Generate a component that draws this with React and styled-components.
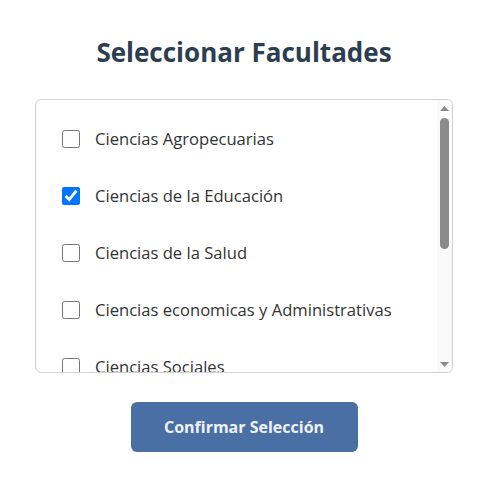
import React, { useState, useRef, useLayoutEffect } from 'react';
import styled, { createGlobalStyle } from 'styled-components';

const facultades = [
  'Ciencias Agropecuarias',
  'Ciencias de la Educación',
  'Ciencias de la Salud',
  'Ciencias economicas y Administrativas',
  'Ciencias Sociales',
  'Ciencias Básicas',
  'Ingeniería',
  'Derecho y Ciencias Políticas',
];

// arrows take 15px each, thumb sits 3px inside the track
const ARROW = 15;
const INSET = 3;

export default function App() {
  const [selected, setSelected] = useState(['Ciencias de la Educación']);
  const [thumb, setThumb] = useState({ top: ARROW + INSET, height: 0 });
  const scrollRef = useRef(null);

  const updateThumb = () => {
    const el = scrollRef.current;
    if (!el) return;
    const track = el.clientHeight - ARROW * 2 - INSET * 2;
    const height = Math.max(20, (track * el.clientHeight) / el.scrollHeight);
    const max = el.scrollHeight - el.clientHeight;
    const top = ARROW + INSET + (max > 0 ? (el.scrollTop / max) * (track - height) : 0);
    setThumb({ top, height });
  };

  useLayoutEffect(updateThumb, []);

  const toggle = (name) => {
    setSelected((prev) =>
      prev.includes(name) ? prev.filter((n) => n !== name) : [...prev, name]
    );
  };

  const scrollBy = (dy) => {
    if (scrollRef.current) scrollRef.current.scrollBy({ top: dy });
  };

  return (
    <Wrapper>
      <GlobalStyle />
      <Title>Seleccionar Facultades</Title>
      <ListBox>
        <ListScroll ref={scrollRef} onScroll={updateThumb}>
          {facultades.map((f) => (
            <Item key={f}>
              <Check type='checkbox' checked={selected.includes(f)} onChange={() => toggle(f)} />
              <ItemText>{f}</ItemText>
            </Item>
          ))}
        </ListScroll>
        <ScrollTrack>
          <ArrowButton onClick={() => scrollBy(-40)}>
            <svg width='9' height='5' viewBox='0 0 9 5'><path d='M4.5 0L9 5H0z' fill='#8a8a8a' /></svg>
          </ArrowButton>
          <Thumb style={{ top: thumb.top, height: thumb.height }} />
          <ArrowButton $bottom onClick={() => scrollBy(40)}>
            <svg width='9' height='5' viewBox='0 0 9 5'><path d='M0 0H9L4.5 5z' fill='#8a8a8a' /></svg>
          </ArrowButton>
        </ScrollTrack>
      </ListBox>
      <ConfirmButton>Confirmar Selección</ConfirmButton>
    </Wrapper>
  );
}

const GlobalStyle = createGlobalStyle`
  body {
    margin: 0;
    background: #ffffff;
    font-family: "Open Sans", "Noto Sans", sans-serif;
  }
`;

const Wrapper = styled.div`
  display: flex;
  flex-direction: column;
  align-items: center;
  padding: 30px 3px 0 0;
`;

const Title = styled.h2`
  margin: 0 0 25px;
  font-size: 26px;
  font-weight: 700;
  color: #2c3e50;
  line-height: 44px;
`;

const ListBox = styled.div`
  position: relative;
  box-sizing: border-box;
  width: 418px;
  height: 274px;
  border: 1px solid #d0d0d0;
  border-radius: 6px;
  overflow: hidden;
`;

const ListScroll = styled.div`
  box-sizing: border-box;
  height: 100%;
  padding: 10px 15px 24px 26px;
  overflow-y: auto;
  scrollbar-width: none;

  &::-webkit-scrollbar {
    display: none;
  }
`;

const ScrollTrack = styled.div`
  position: absolute;
  top: 0;
  right: 0;
  bottom: 0;
  width: 15px;
  background: #fafafa;
  display: flex;
  flex-direction: column;
  justify-content: space-between;
`;

const ArrowButton = styled.div`
  height: 15px;
  display: flex;
  justify-content: center;
  align-items: ${(props) => (props.$bottom ? 'flex-end' : 'flex-start')};
  padding: ${(props) => (props.$bottom ? '0 0 5px' : '6px 0 0')};
  box-sizing: border-box;
  cursor: default;

  svg {
    display: block;
  }
`;

const Thumb = styled.div`
  position: absolute;
  left: 3px;
  width: 9px;
  background: #8a8a8a;
  border-radius: 5px;
`;

const Item = styled.label`
  display: flex;
  align-items: center;
  height: 57px;
  cursor: pointer;
`;

const Check = styled.input`
  width: 18px;
  height: 18px;
  margin: 0 15px 0 0;
  cursor: pointer;
`;

const ItemText = styled.span`
  font-size: 16.6px;
  color: #333333;
`;

const ConfirmButton = styled.button`
  margin-top: 29px;
  width: 227px;
  height: 50px;
  border: 0;
  border-radius: 6px;
  background-color: #4a6fa5;
  color: #eef2f7;
  font-family: "Open Sans", "Noto Sans", sans-serif;
  font-size: 16px;
  font-weight: 700;
  cursor: pointer;
`;
